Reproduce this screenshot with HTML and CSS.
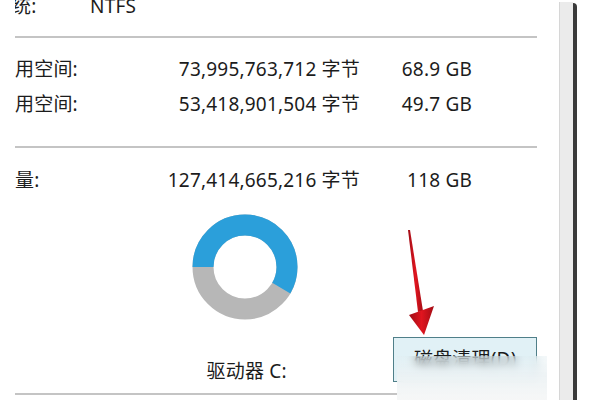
FILE: index.html
```html
<!DOCTYPE html>
<html lang="zh-CN">
<head>
<meta charset="utf-8">
<link rel="stylesheet" href="styles.css">
</head>
<body>
<div class="window">
  <div class="panel">
    <div class="row-top">
      <span class="label-top"><span class="cut">统:</span></span>
      <span class="fs">NTFS</span>
    </div>
    <div class="sep sep-1"></div>
    <div class="grid grid-space">
      <span class="label">用空间:</span><span class="bytes">73,995,763,712 字节</span><span class="gb">68.9 GB</span>
      <span class="label">用空间:</span><span class="bytes">53,418,901,504 字节</span><span class="gb">49.7 GB</span>
    </div>
    <div class="sep sep-2"></div>
    <div class="grid grid-cap">
      <span class="label">量:</span><span class="bytes">127,414,665,216 字节</span><span class="gb">118 GB</span>
    </div>
    <div class="drive">
      <div class="chart">
        <svg class="donut" width="106" height="106" viewBox="0 0 106 106">
          <circle cx="53" cy="53" r="42" fill="none" stroke="#b7b7b7" stroke-width="21"/>
          <circle cx="53" cy="53" r="42" fill="none" stroke="#2b9fda" stroke-width="21" stroke-dasharray="153.9 300" transform="rotate(180 53 53)"/>
        </svg>
        <div class="drive-name">驱动器 C:</div>
      </div>
      <div class="btn">磁盘清理(D)</div>
    </div>
    <div class="sep sep-3"></div>
  </div>
  <div class="scroll"></div>
  <div class="edge"></div>
  <div class="outside"></div>
</div>
<svg class="arrow" width="50" height="120" viewBox="0 0 50 120">
  <defs>
    <linearGradient id="ar" x1="0" y1="0" x2="1" y2="0">
      <stop offset="0" stop-color="#9e0d16"/>
      <stop offset="0.5" stop-color="#e0151f"/>
      <stop offset="1" stop-color="#a30c14"/>
    </linearGradient>
  </defs>
  <polygon points="8,4 10,4 23,85 18,86" fill="url(#ar)"/>
  <polygon points="9,89 34,80 24,109" fill="url(#ar)"/>
</svg>
<div class="smudge"></div>
</body>
</html>
```

FILE: styles.css
```css
html, body {
  margin: 0;
  padding: 0;
  background: #ffffff;
  width: 600px;
  height: 400px;
  overflow: hidden;
}

body {
  font-family: "Noto Sans", "Noto Sans CJK SC", sans-serif;
  font-size: 19px;
  letter-spacing: 0.2px;
  color: #1c1c1c;
  position: relative;
}

.window {
  display: flex;
  height: 400px;
}

.panel {
  width: 522px;
  padding: 0 22px 0 15px;
  margin-top: -6px;
}

.row-top {
  display: flex;
  height: 24px;
  line-height: 24px;
}

.label-top {
  width: 75px;
  overflow: hidden;
}

.cut {
  display: inline-block;
  margin-left: -3px;
}

.sep {
  height: 2px;
  background: #c4c4c4;
}

.sep-1 { margin-top: 18px; }

.grid {
  display: grid;
  grid-template-columns: 145px 200px 112px;
  line-height: 24px;
}

.grid-space {
  margin-top: 19px;
  row-gap: 11px;
}

.sep-2 { margin-top: 30px; }

.grid-cap { margin-top: 20px; }

.bytes, .gb {
  text-align: right;
  white-space: nowrap;
}

.drive {
  display: flex;
  align-items: flex-end;
  margin-top: 22px;
}

.chart {
  width: 200px;
  margin-left: 130px;
  display: flex;
  flex-direction: column;
  align-items: center;
}

.donut {
  display: block;
}

.drive-name {
  margin-top: 39px;
  margin-left: 4px;
  line-height: 24px;
}

.btn {
  margin-left: 49px;
  margin-bottom: 1px;
  width: 142px;
  height: 43px;
  border: 1px solid #4f7f89;
  background: #e1f1f6;
  text-align: center;
  line-height: 43px;
  color: #1a1a1a;
}

.sep-3 { margin-top: 10px; }

.scroll {
  width: 13px;
  margin-top: 2px;
  background: #ebebeb;
  border-left: 1px solid #d6d6d6;
}

.edge {
  width: 4px;
  margin-top: 3px;
  background: #3a3a3a;
  border-top-right-radius: 4px;
}

.outside {
  flex: 1;
  background: #ffffff;
}

.arrow {
  position: absolute;
  left: 400px;
  top: 226px;
}

.smudge {
  position: absolute;
  left: 397px;
  top: 356px;
  width: 150px;
  height: 44px;
  backdrop-filter: blur(4px);
  background: linear-gradient(to bottom, rgba(225, 238, 242, 0.35), rgba(236, 242, 244, 0.9) 45%, rgba(246, 247, 247, 0.98));
}
```
